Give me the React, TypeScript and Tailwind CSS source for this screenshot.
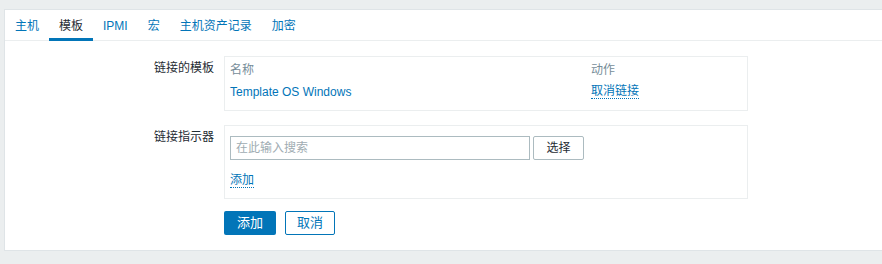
import React from "react";

const tabs = ["主机", "模板", "IPMI", "宏", "主机资产记录", "加密"];

function Tabs() {
  return (
    <div className="flex h-[31px] border-b border-[#ebeeef]">
      {tabs.map((t, i) => (
        <div
          key={t}
          className={
            "relative flex items-center px-[10px] pt-[1px] " +
            (i === 1 ? "text-[#1f2c33]" : "text-[#0275b8]")
          }
        >
          {t}
          {i === 1 && (
            <span className="absolute left-0 right-0 bottom-[-1px] h-[3px] bg-[#0275b8]" />
          )}
        </div>
      ))}
    </div>
  );
}

function FormRow({ label, children }: { label: string; children: React.ReactNode }) {
  return (
    <div className="flex">
      <div className="w-[219px] pr-[10px] pt-[5px] text-right text-[#1f2c33]">{label}</div>
      {children}
    </div>
  );
}

export default function App() {
  return (
    <div
      className="h-[264px] w-[882px] bg-[#ebeeef] pt-[9px] pl-[4px] text-[12px] leading-[14px]"
      style={{ fontFamily: '"Liberation Sans", Arial, "Noto Sans CJK SC", sans-serif' }}
    >
      <div className="h-[242px] border-y border-l border-[#dfe4e7] bg-white">
        <Tabs />
        <div className="flex flex-col pt-[15px]">
          <FormRow label="链接的模板">
            <div className="h-[55px] w-[524px] border border-[#ebeeef] px-[5px] pt-[2px]">
              <div className="flex h-[22px] items-center text-[#768d99]">
                <span className="w-[361px]">名称</span>
                <span>动作</span>
              </div>
              <div className="flex h-[22px] items-center text-[#0275b8]">
                <span className="w-[361px]">Template OS Windows</span>
                <span className="border-b border-dotted border-[#0275b8] leading-[13px]">取消链接</span>
              </div>
            </div>
          </FormRow>
          <div className="mt-[14px]">
            <FormRow label="链接指示器">
              <div className="h-[74px] w-[524px] border border-[#ebeeef] px-[5px] pt-[10px]">
                <div className="flex gap-[3px]">
                  <div className="flex h-[24px] w-[300px] items-center border border-[#acbbc0] px-[5px] text-[#a0acb2]">
                    在此输入搜索
                  </div>
                  <button className="h-[24px] w-[51px] rounded-[2px] border border-[#acbbc0] bg-white text-[#1f2c33]">
                    选择
                  </button>
                </div>
                <div className="mt-[13px]">
                  <span className="border-b border-dotted border-[#0275b8] text-[#0275b8]">添加</span>
                </div>
              </div>
            </FormRow>
          </div>
          <div className="mt-[12px] flex gap-[9px] pl-[219px]">
            <button className="h-[24px] w-[52px] rounded-[2px] bg-[#0275b8] text-[13px] text-white">
              添加
            </button>
            <button className="h-[24px] w-[50px] rounded-[2px] border border-[#0275b8] bg-white text-[13px] text-[#0275b8]">
              取消
            </button>
          </div>
        </div>
      </div>
    </div>
  );
}
